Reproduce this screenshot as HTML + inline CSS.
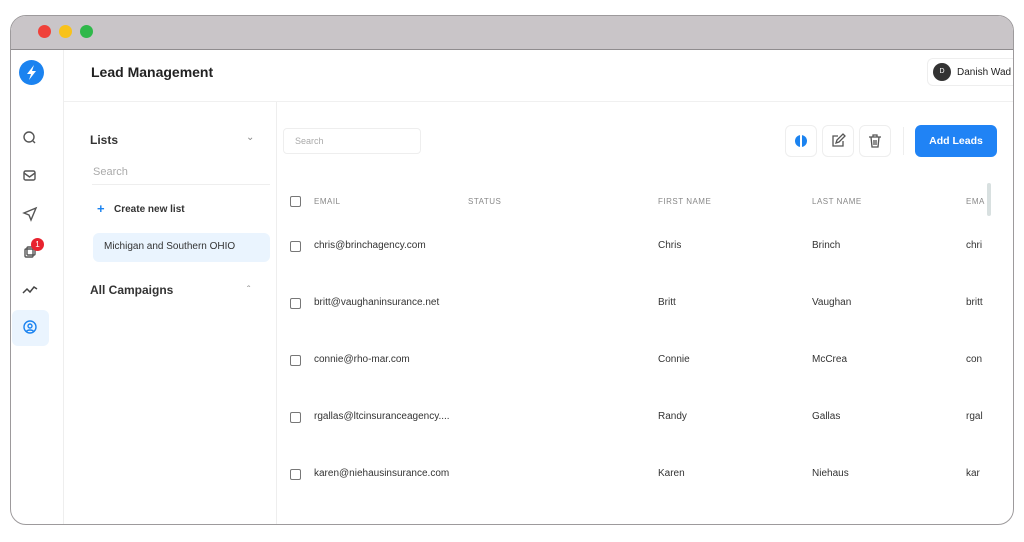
<!DOCTYPE html>
<html><head><style>
*{box-sizing:border-box;margin:0;padding:0}
body{width:1024px;height:542px;background:#fff;font-family:"Liberation Sans",sans-serif;position:relative;overflow:hidden;color:#333}
.win{position:absolute;left:10px;top:15px;width:1004px;height:510px;border:1px solid #9d9a9c;border-radius:16px;overflow:hidden;background:#fff}
.bar{position:absolute;left:0;top:0;right:0;height:34px;background:#c9c5c8;border-bottom:1px solid #8f8c8e}
.dot{position:absolute;top:25px;width:13px;height:13px;border-radius:50%}
.abs{position:absolute}
.t{position:absolute;white-space:nowrap}
.cb{position:absolute;width:11px;height:11px;border:1.3px solid #777;border-radius:2px}
.ib{position:absolute;top:125px;width:32px;height:32px;border:1px solid #eee;border-radius:6px;background:#fff}
</style></head><body>
<div class="win"><div class="bar"></div></div>
<div class="dot" style="left:38px;background:#f0413a"></div>
<div class="dot" style="left:59px;background:#f8c21a"></div>
<div class="dot" style="left:80px;background:#2fb84a"></div>
<!-- left nav -->
<div class="abs" style="left:63px;top:50px;width:1px;height:474px;background:#eee"></div>
<div class="abs" style="left:19px;top:60px;width:25px;height:25px;border-radius:50%;background:#1b83f0"></div>
<svg class="abs" style="left:19px;top:60px" width="25" height="25"><path d="M15 5 L8 14 H12 L10 20 L17 11 H13 Z" fill="#fff"/></svg>
<svg class="abs" style="left:22px;top:130px" width="16" height="16" fill="none" stroke="#555" stroke-width="1.4"><circle cx="7" cy="7" r="5"/><path d="M11 11l2 2"/></svg>
<svg class="abs" style="left:22px;top:169px" width="16" height="14" fill="none" stroke="#555" stroke-width="1.4"><rect x="2" y="2" width="11" height="9" rx="1.5"/><path d="M2 4l5.5 4 5.5-4"/></svg>
<svg class="abs" style="left:22px;top:206px" width="16" height="16" fill="none" stroke="#555" stroke-width="1.4"><path d="M14 2L2 7l5 2 2 5z"/></svg>
<svg class="abs" style="left:22px;top:244px" width="16" height="16" fill="none" stroke="#555" stroke-width="1.4"><rect x="3" y="5" width="8" height="8" rx="1"/><rect x="5" y="3" width="8" height="8" rx="1"/></svg>
<div class="abs" style="left:31px;top:238px;width:13px;height:13px;border-radius:50%;background:#e8232f;color:#fff;font-size:8px;text-align:center;line-height:13px">1</div>
<svg class="abs" style="left:22px;top:284px" width="16" height="12" fill="none" stroke="#444" stroke-width="1.5"><path d="M1 9l4-4 3 3 4-5 3 2"/></svg>
<div class="abs" style="left:12px;top:310px;width:37px;height:36px;border-radius:6px;background:#eaf4fe"></div>
<svg class="abs" style="left:22px;top:319px" width="16" height="16" fill="none" stroke="#1b83f0" stroke-width="1.4"><circle cx="8" cy="8" r="6"/><circle cx="8" cy="7" r="2"/><path d="M4.5 12.5c1-2 6-2 7 0"/></svg>
<!-- header -->
<div class="t" style="left:91px;top:64px;font-size:14px;font-weight:bold;color:#222">Lead Management</div>
<div class="abs" style="left:64px;top:101px;width:949px;height:1px;background:#f0f0f0"></div>
<div class="abs" style="left:927px;top:58px;width:86px;height:28px;border:1px solid #eee;border-right:none;border-radius:6px 0 0 6px"></div>
<div class="abs" style="left:933px;top:63px;width:18px;height:18px;border-radius:50%;background:#333;color:#fff;font-size:7px;text-align:center;line-height:18px">D</div>
<div class="t" style="left:957px;top:67px;font-size:10px;color:#222">Danish Wad</div>
<!-- lists panel -->
<div class="abs" style="left:276px;top:102px;width:1px;height:422px;background:#eee"></div>
<div class="t" style="left:90px;top:133px;font-size:12px;font-weight:bold">Lists</div>
<div class="t" style="left:246px;top:132px;font-size:10px;color:#888">&#8964;</div>
<div class="t" style="left:93px;top:166px;font-size:11px;color:#aaa">Search</div>
<div class="abs" style="left:92px;top:184px;width:178px;height:1px;background:#eee"></div>
<div class="t" style="left:97px;top:201px;font-size:13px;color:#1b83f0;font-weight:bold">+</div>
<div class="t" style="left:114px;top:204px;font-size:10px;font-weight:bold;color:#333">Create new list</div>
<div class="abs" style="left:93px;top:233px;width:177px;height:29px;border-radius:6px;background:#eaf4fe"></div>
<div class="t" style="left:104px;top:241px;font-size:10px;color:#333">Michigan and Southern OHIO</div>
<div class="t" style="left:90px;top:283px;font-size:12px;font-weight:bold">All Campaigns</div>
<div class="t" style="left:247px;top:285px;font-size:10px;color:#888">&#710;</div>
<!-- table -->
<div class="abs" style="left:283px;top:128px;width:138px;height:26px;border:1px solid #eee;border-radius:4px"></div>
<div class="t" style="left:295px;top:136px;font-size:9px;color:#aaa">Search</div>
<div class="ib" style="left:785px"></div>
<div class="abs" style="left:795px;top:135px;width:12px;height:12px;border-radius:50%;background:#1b83f0"></div>
<div class="abs" style="left:800px;top:134px;width:2px;height:14px;background:#fff"></div>
<div class="ib" style="left:822px"></div>
<svg class="abs" style="left:830px;top:133px" width="16" height="16" fill="none" stroke="#555" stroke-width="1.3"><path d="M8 3H3v10h10V8"/><path d="M6 10l1-3 6-6 2 2-6 6z"/></svg>
<div class="ib" style="left:859px"></div>
<svg class="abs" style="left:867px;top:133px" width="16" height="16" fill="none" stroke="#555" stroke-width="1.3"><path d="M2 4h12M6 4V2h4v2M4 4l1 10h6l1-10M7 7v5M9 7v5"/></svg>
<div class="abs" style="left:903px;top:127px;width:1px;height:28px;background:#eee"></div>
<div class="abs" style="left:915px;top:125px;width:82px;height:32px;border-radius:6px;background:#2083f5;color:#fff;font-size:10.5px;font-weight:bold;text-align:center;line-height:32px">Add Leads</div>
<div class="abs" style="left:987px;top:183px;width:4px;height:33px;background:#d8e0e0;border-radius:2px"></div>
<div class="cb" style="left:290px;top:196px"></div>
<div class="t" style="left:314px;top:197px;font-size:8px;color:#888;letter-spacing:.5px">EMAIL</div>
<div class="t" style="left:468px;top:197px;font-size:8px;color:#888;letter-spacing:.5px">STATUS</div>
<div class="t" style="left:658px;top:197px;font-size:8px;color:#888;letter-spacing:.5px">FIRST NAME</div>
<div class="t" style="left:812px;top:197px;font-size:8px;color:#888;letter-spacing:.5px">LAST NAME</div>
<div class="t" style="left:966px;top:197px;font-size:8px;color:#888;letter-spacing:.5px">EMA</div>
<div style="position:absolute;left:0;top:0;font-size:10px;color:#333">
<div class="cb" style="left:290px;top:241px"></div><div class="t" style="left:314px;top:240px">chris@brinchagency.com</div><div class="t" style="left:658px;top:240px">Chris</div><div class="t" style="left:812px;top:240px">Brinch</div><div class="t" style="left:966px;top:240px">chri</div>
<div class="cb" style="left:290px;top:298px"></div><div class="t" style="left:314px;top:297px">britt@vaughaninsurance.net</div><div class="t" style="left:658px;top:297px">Britt</div><div class="t" style="left:812px;top:297px">Vaughan</div><div class="t" style="left:966px;top:297px">britt</div>
<div class="cb" style="left:290px;top:355px"></div><div class="t" style="left:314px;top:354px">connie@rho-mar.com</div><div class="t" style="left:658px;top:354px">Connie</div><div class="t" style="left:812px;top:354px">McCrea</div><div class="t" style="left:966px;top:354px">con</div>
<div class="cb" style="left:290px;top:412px"></div><div class="t" style="left:314px;top:411px">rgallas@ltcinsuranceagency....</div><div class="t" style="left:658px;top:411px">Randy</div><div class="t" style="left:812px;top:411px">Gallas</div><div class="t" style="left:966px;top:411px">rgal</div>
<div class="cb" style="left:290px;top:469px"></div><div class="t" style="left:314px;top:468px">karen@niehausinsurance.com</div><div class="t" style="left:658px;top:468px">Karen</div><div class="t" style="left:812px;top:468px">Niehaus</div><div class="t" style="left:966px;top:468px">kar</div>
</div>
</body></html>
